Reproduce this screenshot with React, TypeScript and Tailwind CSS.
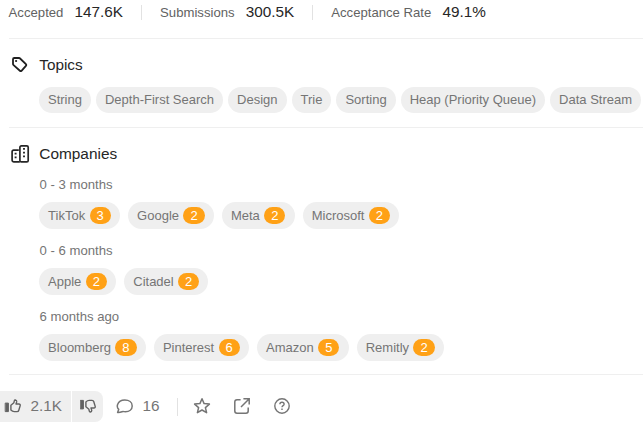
import React from "react";

const topics = ["String", "Depth-First Search", "Design", "Trie", "Sorting", "Heap (Priority Queue)", "Data Stream"];

type Company = [name: string, count: number];

const groups: { label: string; items: Company[] }[] = [
  { label: "0 - 3 months", items: [["TikTok", 3], ["Google", 2], ["Meta", 2], ["Microsoft", 2]] },
  { label: "0 - 6 months", items: [["Apple", 2], ["Citadel", 2]] },
  { label: "6 months ago", items: [["Bloomberg", 8], ["Pinterest", 6], ["Amazon", 5], ["Remitly", 2]] },
];

function Stat({ label, value }: { label: string; value: string }) {
  return (
    <div className="flex items-start gap-[11.2px] whitespace-nowrap">
      <span className="text-[13.15px] leading-5 text-[#626262] pt-px">{label}</span>
      <span className="text-[15.3px] leading-5 text-[#262626]">{value}</span>
    </div>
  );
}

function TagIcon() {
  return (
    <svg width="18" height="18" viewBox="0 0 18 18" fill="none" stroke="#1f1f1f" strokeWidth="1.8" strokeLinejoin="round">
      <path d="M3 4.3Q3 3 4.3 3H9Q9.6 3 10.1 3.5L15.9 9.2Q16.7 10 15.9 10.8L11.5 15.8Q10.7 16.5 9.9 15.8L3.6 10.1Q3 9.6 3 8.9Z" />
      <circle cx="6.1" cy="6" r="1.1" fill="#1f1f1f" stroke="none" />
    </svg>
  );
}

function BuildingIcon() {
  return (
    <svg width="20" height="20" viewBox="0 0 20 20" fill="none" stroke="#262626" strokeWidth="1.7" strokeLinejoin="round">
      <rect x="9.9" y="1.9" width="8.3" height="16" rx="1.4" />
      <path d="M8.8 6.1H3.7Q2.1 6.1 2.1 7.7V16.3Q2.1 17.9 3.7 17.9H9.8" />
      <path d="M14 3.9v1.8M14 7.7v1.8M14 11.4v1.8M5.6 8.8v1.8M5.6 12.5v1.8" strokeWidth="1.9" />
    </svg>
  );
}

function ThumbIcon() {
  return (
    <svg width="18" height="18" viewBox="0 0 18 18" fill="none" stroke="#626262" strokeWidth="1.4" strokeLinejoin="round" strokeLinecap="round">
      <path d="M1.6 6.1h2.8v8.5H1.6z" fill="#626262" strokeWidth="1" />
      <path d="M6.9 8.2L9.9 5.7L10.3 3.8Q10.5 2.9 11.4 3Q12.9 3.3 12.7 4.9L12 7H14.9Q16.5 7.1 16.2 8.6L14.8 13.2Q14.4 14.6 13 14.6H10.2Q8.4 14.6 6.9 13.1Z" />
    </svg>
  );
}

export default function App() {
  return (
    <div className="h-[423px] w-[643px] overflow-hidden bg-white font-['Liberation_Sans',sans-serif]">
      <div className="ml-[9px]">
        <div className="-ml-[0.4px] flex h-[38px] items-start pt-[2px]">
          <Stat label="Accepted" value="147.6K" />
          <div className="mt-[3px] ml-[18px] mr-[18px] h-[15px] w-px bg-[#e2e2e2]" />
          <Stat label="Submissions" value="300.5K" />
          <div className="mt-[3px] ml-[18px] mr-[18px] h-[15px] w-px bg-[#e2e2e2]" />
          <Stat label="Acceptance Rate" value="49.1%" />
        </div>

        <section className="h-[89px] border-t border-[#efefef]">
          <div className="flex h-[48px] items-start pt-[16px]">
            <div className="ml-[1px] mr-[11.3px]"><TagIcon /></div>
            <h2 className="text-[15.3px] leading-5 text-[#262626]">Topics</h2>
          </div>
          <div className="ml-[30px] flex gap-[5px]">
            {topics.map((t) => (
              <span key={t} className="h-[26px] shrink-0 whitespace-nowrap rounded-full bg-[#efefef] px-[9px] text-[13px] leading-[26px] text-[#757575]">{t}</span>
            ))}
          </div>
        </section>

        <section className="h-[247px] border-t border-[#efefef]">
          <div className="flex h-[46px] items-start pt-[16px]">
            <div className="ml-[1px] mr-[9.3px]"><BuildingIcon /></div>
            <h2 className="text-[15.4px] leading-5 text-[#262626]">Companies</h2>
          </div>
          <div className="ml-[30px]">
            {groups.map((g) => (
              <div key={g.label} className="h-[66px]">
                <div className="h-[28px] pl-[0.5px] text-[13.15px] leading-[22px] text-[#757575]">{g.label}</div>
                <div className="flex gap-[8.1px]">
                  {g.items.map(([name, count]) => (
                    <span key={name} className="flex h-[27px] items-center gap-[4.4px] rounded-full bg-[#efefef] px-[9.1px] text-[13px] text-[#757575]">
                      {name}
                      <span className="h-[17px] rounded-full bg-[#ffa116] px-[7px] leading-[17px] text-white">{count}</span>
                    </span>
                  ))}
                </div>
              </div>
            ))}
          </div>
        </section>
        <div className="h-px bg-[#efefef]" />
      </div>

      <div className="mt-4 flex h-[31px] items-center text-[15px] text-[#757575]">
        <button className="flex h-full w-[71px] items-center gap-2 bg-[#efefef] pb-px pl-1">
          <ThumbIcon />
          <span className="pl-[0.5px] text-[15.3px]">2.1K</span>
        </button>
        <button className="ml-px flex h-full w-[31px] items-center justify-center rounded-r-lg bg-[#efefef] pb-px">
          <span className="-scale-y-100"><ThumbIcon /></span>
        </button>
        <button className="ml-[13px] flex items-center gap-[8.5px] pb-px">
          <svg width="18" height="18" viewBox="0 0 18 18" fill="none" stroke="#757575" strokeWidth="1.5" strokeLinejoin="round">
            <path d="M1.6 15.4L2.7 12.4C1.3 11 1 9.2 1.6 7.4C2.6 4.7 5.3 3.1 8.8 3.1C13 3.1 16.2 5.4 16.2 8.9C16.2 12.5 13.2 14.7 9.4 14.7C8 14.7 7 14.4 6 14.7Q4 15.5 1.6 15.4Z" />
          </svg>
          <span className="text-[15.3px]">16</span>
        </button>
        <div className="ml-[17.7px] h-[18px] w-px bg-[#e2e2e2]" />
        <div className="ml-[15px] flex gap-[22px] pb-px">
          <svg width="18" height="18" viewBox="0 0 18 18" fill="none" stroke="#757575" strokeWidth="1.5" strokeLinejoin="round">
            <path d="M9 1.8L11.1 6.6L16.4 7.1L12.4 10.6L13.6 15.7L9 13L4.4 15.7L5.6 10.6L1.6 7.1L6.9 6.6Z" />
          </svg>
          <svg width="18" height="18" viewBox="0 0 18 18" fill="none" stroke="#757575" strokeWidth="1.5">
            <path d="M7.6 2.8H4Q1.8 2.8 1.8 5V14Q1.8 16.2 4 16.2H13Q15.2 16.2 15.2 14V10.5M10.4 1.8H16.2V7.6M16 2L8 10" />
          </svg>
          <svg width="18" height="18" viewBox="0 0 18 18" fill="none" stroke="#757575" strokeWidth="1.4">
            <circle cx="9" cy="9" r="7.2" />
            <path d="M6.9 7.3C6.9 4.6 11.1 4.7 11.1 7.2C11.1 8.7 9 8.6 9 10.3M9 11.4V13" />
          </svg>
        </div>
      </div>
    </div>
  );
}
